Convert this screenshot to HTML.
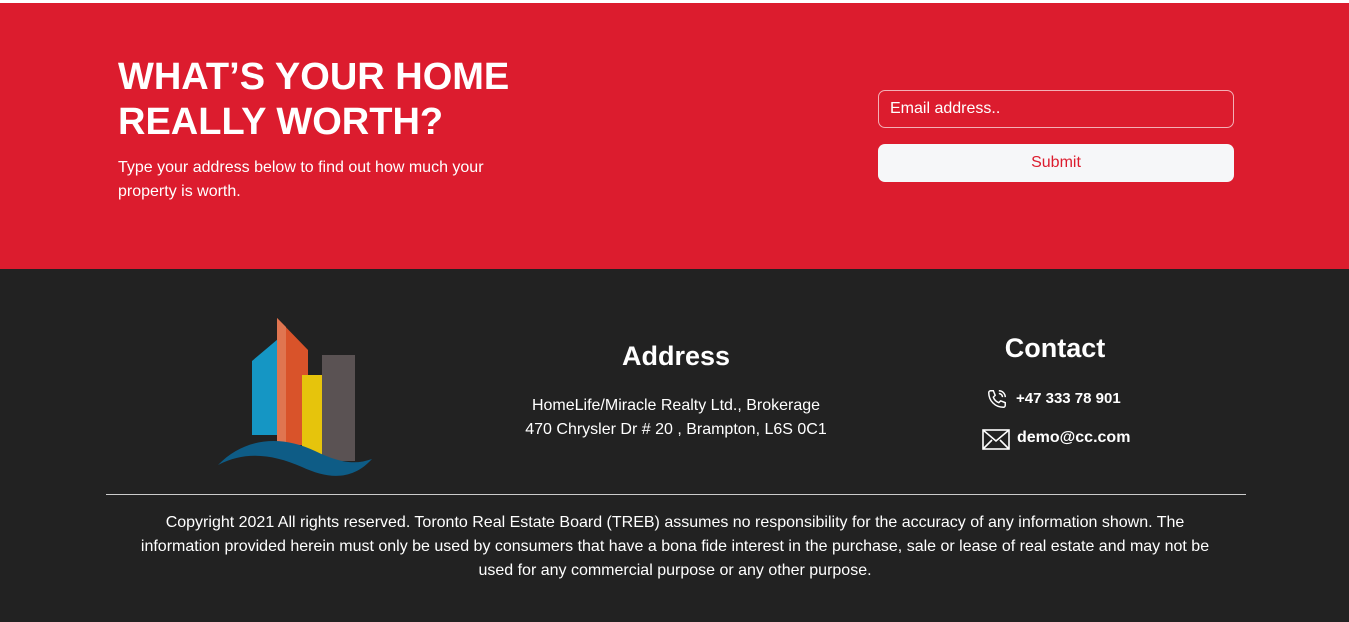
<!DOCTYPE html>
<html><head><meta charset="utf-8"><style>
*{margin:0;padding:0;box-sizing:border-box}
body{width:1349px;height:622px;overflow:hidden;background:#fff;font-family:"Liberation Sans",sans-serif}
.red{position:absolute;top:3px;left:0;width:1349px;height:266px;background:#dc1c2e;color:#fff}
.red h1{position:absolute;left:118px;top:52px;font-size:38px;line-height:45px;font-weight:600;letter-spacing:0}
.red p{position:absolute;left:118px;top:153px;font-size:16px;line-height:24px;width:400px}
.inp{position:absolute;left:878px;top:87px;width:356px;height:38px;border:1px solid #f3b0b6;border-radius:7px;font-size:16px;padding:9px 11px}
.btn{position:absolute;left:878px;top:141px;width:356px;height:38px;background:#f6f7f9;border-radius:7px;color:#dc1c2e;text-align:center;font-size:16px;line-height:38px}
.dark{position:absolute;top:269px;left:0;width:1349px;height:353px;background:#222;color:#fff}
.addr{position:absolute;left:476px;width:400px;text-align:center}
.addr h2{font-size:27px;font-weight:600;margin-top:72px}
.addr p{font-size:16px;line-height:24px;margin-top:22px}
.ct{position:absolute;left:955px;width:200px;text-align:center}
.ct h2{font-size:27px;font-weight:600;margin-top:64px}
.row{position:absolute;font-size:15px;font-weight:700}
hr{position:absolute;top:225px;left:106px;width:1140px;border:0;border-top:1px solid #ccc}
.cp{position:absolute;top:242px;left:118px;width:1114px;text-align:center;font-size:16px;line-height:24px}
</style></head><body>
<div class="red">
<h1>WHAT’S YOUR HOME<br>REALLY WORTH?</h1>
<p>Type your address below to find out how much your property is worth.</p>
<div class="inp">Email address..</div>
<div class="btn">Submit</div>
</div>
<div class="dark">
<svg style="position:absolute;left:0;top:0" width="400" height="220">
<polygon points="252,92 278,70 278,166 252,166" fill="#1596c4"/>
<polygon points="277,49 308,81 308,176 277,176" fill="#d9532a"/>
<polygon points="277,49 286,58 286,176 277,176" fill="#e07550"/>
<polygon points="302,106 323,106 323,186 302,186" fill="#e6c40c"/>
<polygon points="322,86 355,86 355,192 322,192" fill="#5a5253"/>
<path d="M218,196 C245,168 282,166 315,182 C340,194 355,196 372,190 C352,212 328,210 302,198 C272,185 245,182 218,196Z" fill="#0e5c86"/>
</svg>
<div class="addr"><h2>Address</h2><p>HomeLife/Miracle Realty Ltd., Brokerage<br>470 Chrysler Dr # 20 , Brampton, L6S 0C1</p></div>
<div class="ct"><h2>Contact</h2></div>
<svg style="position:absolute;left:986px;top:119px" width="22" height="22" viewBox="0 0 24 24" fill="none" stroke="#fff" stroke-width="1.6"><path d="M5 3l3 0 2 5-2 2c1 3 3 5 6 6l2-2 5 2v3c0 1-1 2-2 2C10 21 3 14 3 5c0-1 1-2 2-2z"/><path d="M14 3a7 7 0 0 1 7 7M14 6a4 4 0 0 1 4 4"/></svg>
<div class="row" style="left:1016px;top:121px">+47 333 78 901</div>
<svg style="position:absolute;left:982px;top:160px" width="28" height="21" viewBox="0 0 28 21" fill="none" stroke="#fff" stroke-width="1.6"><rect x="1" y="1" width="26" height="19"/><path d="M1 1l13 11 13-11M1 20l9-9M27 20l-9-9"/></svg>
<div class="row" style="left:1017px;top:160px;font-size:16px">demo@cc.com</div>
<hr>
<div class="cp">Copyright 2021 All rights reserved. Toronto Real Estate Board (TREB) assumes no responsibility for the accuracy of any information shown. The<br>information provided herein must only be used by consumers that have a bona fide interest in the purchase, sale or lease of real estate and may not be<br>used for any commercial purpose or any other purpose.</div>
</div>
</body></html>
